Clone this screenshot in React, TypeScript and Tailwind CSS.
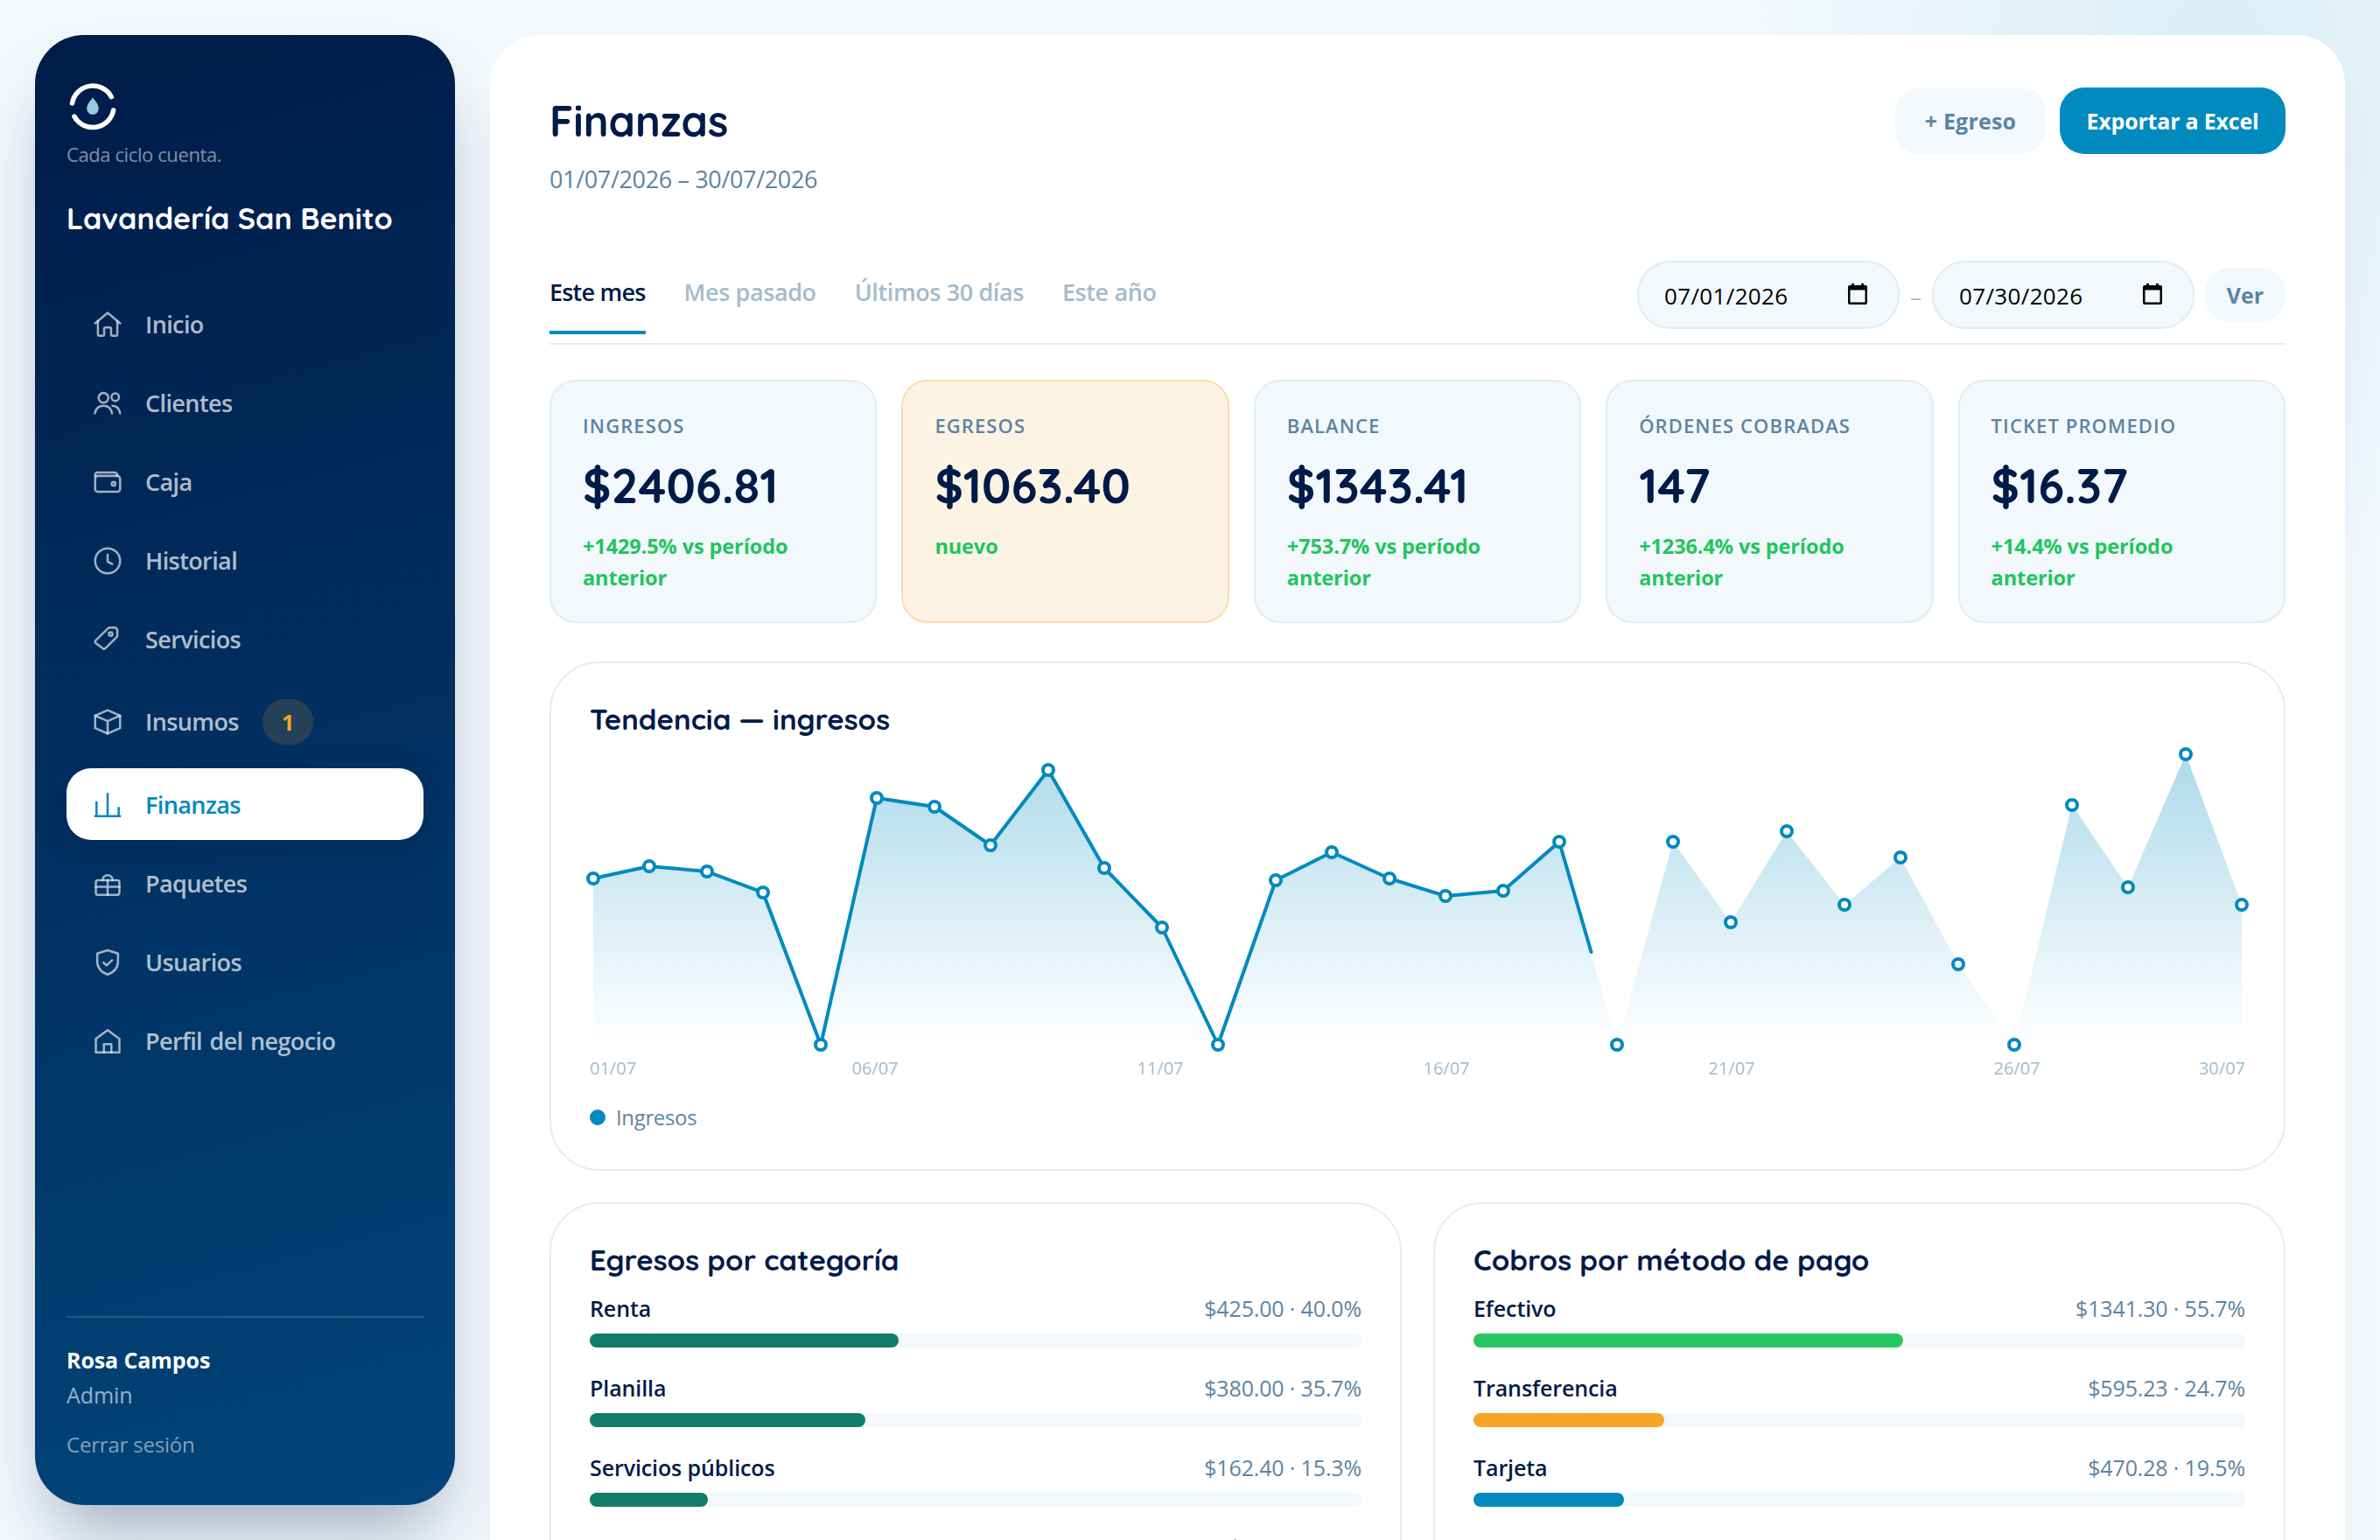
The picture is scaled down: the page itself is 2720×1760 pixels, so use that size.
import type { ReactNode } from "react"

const NAV: { label: string; icon: ReactNode; badge?: number; active?: boolean }[] = [
  {
    label: "Inicio",
    icon: (
      <>
        <path d="M3 11l9-7.5 9 7.5" />
        <path d="M5 9.5V19a1 1 0 0 0 1 1h2.5a1 1 0 0 0 1-1v-4a1 1 0 0 1 1-1h3a1 1 0 0 1 1 1v4a1 1 0 0 0 1 1H18a1 1 0 0 0 1-1V9.5" />
      </>
    ),
  },
  {
    label: "Clientes",
    icon: (
      <>
        <circle cx="9" cy="8" r="3.5" />
        <circle cx="17.5" cy="7.5" r="2.7" />
        <path d="M2.8 19.2c.6-3.5 3-5.5 6.2-5.5s5.6 2 6.2 5.5" />
        <path d="M15.5 13.7c3 .1 5 2.2 5.5 5.5" />
      </>
    ),
  },
  {
    label: "Caja",
    icon: (
      <>
        <rect x="3" y="7.5" width="18" height="11.5" rx="2" />
        <path d="M3 8V6.5A1.5 1.5 0 0 1 4.5 5H17a2 2 0 0 1 2 2v.5" />
        <circle cx="16.3" cy="13.2" r="1.3" />
      </>
    ),
  },
  {
    label: "Historial",
    icon: (
      <>
        <circle cx="12" cy="12" r="9" />
        <path d="M12 7.5v5l3.3 1.8" />
      </>
    ),
  },
  {
    label: "Servicios",
    icon: (
      <>
        <path d="M3.3 12.7l9-8.8a2 2 0 0 1 1.4-.6H17a2 2 0 0 1 2 2v3.6a2 2 0 0 1-.6 1.4l-8 7.9a1.5 1.5 0 0 1-2.1 0l-5-3.9a1.2 1.2 0 0 1 0-1.6z" />
        <circle cx="14.2" cy="8" r="1.3" />
      </>
    ),
  },
  {
    label: "Insumos",
    badge: 1,
    icon: (
      <>
        <path d="M12 3.5l9 4v9l-9 4-9-4v-9z" />
        <path d="M3 7.5l9 4 9-4M12 11.5v9" />
      </>
    ),
  },
  {
    label: "Finanzas",
    active: true,
    icon: (
      <>
        <path d="M3 20h18" />
        <path d="M4 20V10M12 20V4M20 20v-6" />
      </>
    ),
  },
  {
    label: "Paquetes",
    icon: (
      <>
        <rect x="3.5" y="9.5" width="17" height="10.5" rx="1.5" />
        <path d="M3.5 14.2h17M12 9.5V20" />
        <path d="M8.3 9.5a3.7 3.7 0 0 1 7.4 0" />
      </>
    ),
  },
  {
    label: "Usuarios",
    icon: (
      <>
        <path d="M12 3.2l7.5 2.3v5.5c0 4.5-3 8-7.5 9.7-4.5-1.7-7.5-5.2-7.5-9.7V5.5z" />
        <path d="M9 12l2.2 2.1 4-3.8" />
      </>
    ),
  },
  {
    label: "Perfil del negocio",
    icon: (
      <>
        <path d="M3.5 20v-9.8L12 4l8.500 6.200V20z" />
        <path d="M9.3 20v-6h5.4v6" />
      </>
    ),
  },
]

const TABS = ["Este mes", "Mes pasado", "Últimos 30 días", "Este año"]

const KPIS = [
  { label: "INGRESOS", value: "$2406.81", delta: "+1429.5% vs período anterior" },
  { label: "EGRESOS", value: "$1063.40", delta: "nuevo", warn: true },
  { label: "BALANCE", value: "$1343.41", delta: "+753.7% vs período anterior" },
  { label: "ÓRDENES COBRADAS", value: "147", delta: "+1236.4% vs período anterior" },
  { label: "TICKET PROMEDIO", value: "$16.37", delta: "+14.4% vs período anterior" },
]

const EXPENSES = [
  { name: "Renta", amount: "$425.00", pct: 40.0, color: "#117c67" },
  { name: "Planilla", amount: "$380.00", pct: 35.7, color: "#117c67" },
  { name: "Servicios públicos", amount: "$162.40", pct: 15.3, color: "#117c67" },
  { name: "Insumos", amount: "$96.00", pct: 9.0, color: "#117c67" },
]

const METHODS = [
  { name: "Efectivo", amount: "$1341.30", pct: 55.7, color: "#25c760" },
  { name: "Transferencia", amount: "$595.23", pct: 24.7, color: "#f5a524" },
  { name: "Tarjeta", amount: "$470.28", pct: 19.5, color: "#018abe" },
]

// height of every day's point over the base line
const SERIES = [
  190, 204, 198, 174, 0, 282, 272, 228, 314, 202, 134, 0, 188, 220, 190, 170, 176, 232, 0, 232, 140, 244, 160, 214,
  92, 0, 274, 180, 332, 160,
]
const BASE = 351
const POINTS = SERIES.map((v, i) => ({ x: 4 + Math.round((i * 1884) / 29 / 2) * 2, y: BASE - v }))
const LABELS = [
  { text: "01/07", x: 0, anchor: "start" as const },
  { text: "06/07", x: 326, anchor: "middle" as const },
  { text: "11/07", x: 652, anchor: "middle" as const },
  { text: "16/07", x: 979, anchor: "middle" as const },
  { text: "21/07", x: 1305, anchor: "middle" as const },
  { text: "26/07", x: 1631, anchor: "middle" as const },
  { text: "30/07", x: 1892, anchor: "end" as const },
]

function Logo() {
  return (
    <svg viewBox="0 0 60 60" className="size-[60px]" fill="none">
      <path d="M6.5 26A24 24 0 0 1 51.3 18.7" stroke="#fff" strokeWidth="5.5" strokeLinecap="round" />
      <path d="M9 41.2A24 24 0 0 0 53.6 34" stroke="#fff" strokeWidth="5.5" strokeLinecap="round" />
      <path d="M30 19.5c3 4 6.8 8 6.8 12.6a6.8 6.8 0 0 1-13.6 0c0-4.6 3.8-8.6 6.8-12.6z" fill="#97cadb" />
    </svg>
  )
}

function Sidebar() {
  return (
    <aside className="w-[480px] h-[1680px] shrink-0 flex flex-col rounded-[56px] bg-[linear-gradient(165deg,#001b48,#02457a)] px-9 pt-[52px] pb-[49px] text-white shadow-[0_48px_80px_-22px_rgba(0,27,72,0.35)]">
      <Logo />
      <p className="mt-2 text-[22px] leading-8 tracking-[-0.4px] text-white/50">Cada ciclo cuenta.</p>
      <h2 className="mt-9 font-['Quicksand','Lato',sans-serif] text-[34px] leading-[44px] font-bold">
        Lavandería San Benito
      </h2>

      <nav className="mt-[57px] flex flex-col gap-2">
        {NAV.map((item) => (
          <a
            key={item.label}
            className={`flex items-center gap-6 rounded-[28px] px-7 pt-px text-[27px] leading-9 font-semibold tracking-[-0.6px] [word-spacing:2px] ${
              item.badge ? "h-[91px]" : "h-[82px]"
            } ${item.active ? "bg-white text-[#018abe] shadow-[0_8px_32px_rgba(0,27,72,0.35)]" : "text-white/70"}`}
          >
            <svg
              viewBox="0 0 24 24"
              className={`size-[38px] shrink-0 ${item.active ? "" : "opacity-90"}`}
              fill="none"
              stroke="currentColor"
              strokeWidth="1.6"
              strokeLinecap="round"
              strokeLinejoin="round"
            >
              {item.icon}
            </svg>
            {item.label}
            {item.badge && (
              <span className="ml-[3px] flex h-[52px] w-[58px] items-center justify-center rounded-full bg-[#f5a524]/15 text-[25px] font-bold text-[#f5a524]">
                {item.badge}
              </span>
            )}
          </a>
        ))}
      </nav>

      <div className="mt-auto border-t-2 border-white/15 pt-7 leading-10">
        <p className="text-[25px] font-bold tracking-[-0.1px]">Rosa Campos</p>
        <p className="text-[25px] tracking-[-0.1px] text-white/60">Admin</p>
        <p className="mt-[17px] text-[24px] tracking-[-0.2px] text-white/50">Cerrar sesión</p>
      </div>
    </aside>
  )
}

function DateField({ value }: { value: string }) {
  return (
    <div className="flex h-[78px] w-[300px] items-center justify-between rounded-[38px] border-2 border-[#e1edf4] bg-[#f2f8fc] pr-[35px] pl-[29px] text-[26px] tracking-[0.35px] text-black">
      <span className="pt-0.5">{value}</span>
      <svg viewBox="0 0 22 24" className="mb-[3px] h-6 w-[22px]">
        <path d="M4 0h3v2h8V0h3v2h2a2 2 0 0 1 2 2v18a2 2 0 0 1-2 2H2a2 2 0 0 1-2-2V4a2 2 0 0 1 2-2h2zM2.5 7.5v14h17v-14z" />
      </svg>
    </div>
  )
}

function Trend() {
  const line = POINTS.slice(0, 18).map((p) => `${p.x} ${p.y}`).join("L")
  const area = POINTS.map((p) => `${p.x} ${p.y}`).join("L")
  return (
    <svg viewBox="0 0 1892 400" className="h-[400px] w-full overflow-visible">
      <defs>
        <linearGradient id="fill" x1="0" x2="0" y1="19" y2="351" gradientUnits="userSpaceOnUse">
          <stop offset="0" stopColor="#018abe" stopOpacity="0.32" />
          <stop offset="1" stopColor="#018abe" stopOpacity="0" />
        </linearGradient>
      </defs>
      <path d={`M4 ${BASE}L${area}V${BASE}z`} fill="url(#fill)" />
      <path
        d={`M${line}L1144.5 245`}
        fill="none"
        stroke="#018abe"
        strokeWidth="4"
        strokeLinecap="round"
        strokeLinejoin="round"
      />
      {POINTS.map((p) => (
        <circle key={p.x} cx={p.x} cy={p.y} r="6" fill="#fff" stroke="#018abe" strokeWidth="4" />
      ))}
      {LABELS.map((l) => (
        <text key={l.text} x={l.x} y="385" textAnchor={l.anchor} fill="#a3bccd" fontSize="20">
          {l.text}
        </text>
      ))}
    </svg>
  )
}

function Breakdown({ title, rows }: { title: string; rows: typeof EXPENSES }) {
  return (
    <section className="h-[600px] rounded-[56px] border-2 border-[#e1edf4] px-11 pt-[42px]">
      <h3 className="font-['Quicksand','Lato',sans-serif] text-[33px] leading-[44px] font-bold">{title}</h3>
      <div className="mt-[15px] flex flex-col gap-7">
        {rows.map((r) => (
          <div key={r.name}>
            <div className="flex justify-between text-[25px] leading-9">
              <span className="font-semibold tracking-[-0.1px]">{r.name}</span>
              <span className="tracking-[-0.15px] text-[#5d84a3]">
                {r.amount} · {r.pct.toFixed(1)}%
              </span>
            </div>
            <div className="mt-[11px] h-4 rounded-full bg-[#f2f8fc]">
              <div className="h-4 rounded-full" style={{ width: `${r.pct}%`, background: r.color }} />
            </div>
          </div>
        ))}
      </div>
    </section>
  )
}

export default function App() {
  return (
    <div className="flex h-[1760px] w-[2720px] items-start gap-10 overflow-hidden bg-[#f3f8fc] bg-[radial-gradient(ellipse_540px_620px_at_2530px_60px,#d9eef6,#f3f8fc00)] p-10 font-['Open_Sans','Noto_Sans',sans-serif] text-[#001b48]">
      <Sidebar />

      <main className="h-[2000px] w-[2120px] shrink-0 rounded-[56px] bg-white px-[68px] pt-[60px] shadow-[0_48px_72px_-24px_rgba(0,27,72,0.08)]">
        <header className="flex items-start justify-between">
          <div>
            <h1 className="mt-2 font-['Quicksand','Lato',sans-serif] text-[48.5px] leading-[60px] font-bold">Finanzas</h1>
            <p className="mt-[17px] text-[27px] leading-10 tracking-[-0.35px] text-[#5d84a3]">01/07/2026 – 30/07/2026</p>
          </div>
          <div className="flex gap-4 text-[25px] font-bold">
            <button className="h-[76px] w-[172px] rounded-[28px] bg-[#f2f8fc] pt-0.5 tracking-[0.2px] text-[#5d84a3]">
              + Egreso
            </button>
            <button className="h-[76px] w-[258px] rounded-[28px] bg-[#018abe] pt-0.5 tracking-[-0.2px] text-white">
              Exportar a Excel
            </button>
          </div>
        </header>

        {/* Rango */}
        <div className="mt-[73px] flex items-start justify-between border-b-2 border-[#e1edf4] pb-2.5">
          <div className="mt-4 flex gap-11 text-[27px] leading-10 font-semibold">
            {TABS.map((t, i) => (
              <button
                key={t}
                className={`border-b-4 pb-6 ${
                  i === 0
                    ? "border-[#018abe] tracking-[-0.8px] text-[#001b48]"
                    : "border-transparent tracking-[-0.4px] text-[#a3bccd]"
                }`}
              >
                {t}
              </button>
            ))}
          </div>
          <div className="flex items-center gap-3">
            <DateField value="07/01/2026" />
            <span className="pt-1 text-[26px] text-[#a3bccd]">–</span>
            <DateField value="07/30/2026" />
            <button className="h-[62px] w-[92px] rounded-[28px] bg-[#f2f8fc] pt-0.5 text-[25px] font-bold text-[#5d84a3]">
              Ver
            </button>
          </div>
        </div>

        {/* KPIs */}
        <div className="mt-10 grid grid-cols-5 gap-7">
          {KPIS.map((k) => (
            <div
              key={k.label}
              className={`h-[278px] rounded-[30px] border-2 px-9 pt-[34px] ${
                k.warn ? "border-[#fcdcab] bg-[#fdf3e3]" : "border-[#e1edf4] bg-[#f2f8fc]"
              }`}
            >
              <p className="text-[22px] leading-8 font-semibold tracking-[1.1px] text-[#5d84a3]">{k.label}</p>
              <p className="mt-[21px] font-['Quicksand','Lato',sans-serif] text-[54.4px] leading-[64px] font-bold">
                {k.value}
              </p>
              <p className="mt-[19px] max-w-[284px] text-[23.5px] leading-9 font-bold tracking-[-0.1px] text-[#22c55e]">
                {k.delta}
              </p>
            </div>
          ))}
        </div>

        {/* Tendencia */}
        <section className="mt-11 h-[582px] rounded-[56px] border-2 border-[#e1edf4] px-11 pt-[42px]">
          <h3 className="-mb-px font-['Quicksand','Lato',sans-serif] text-[33px] leading-[44px] font-bold">
            Tendencia — ingresos
          </h3>
          <Trend />
          <div className="mt-[18px] flex items-center gap-3 text-[24px] leading-8 tracking-[-0.35px] text-[#5d84a3]">
            <span className="size-[18px] rounded-full bg-[#018abe]" />
            Ingresos
          </div>
        </section>

        <div className="mt-9 grid grid-cols-2 gap-9">
          <Breakdown title="Egresos por categoría" rows={EXPENSES} />
          <Breakdown title="Cobros por método de pago" rows={METHODS} />
        </div>
      </main>
    </div>
  )
}
